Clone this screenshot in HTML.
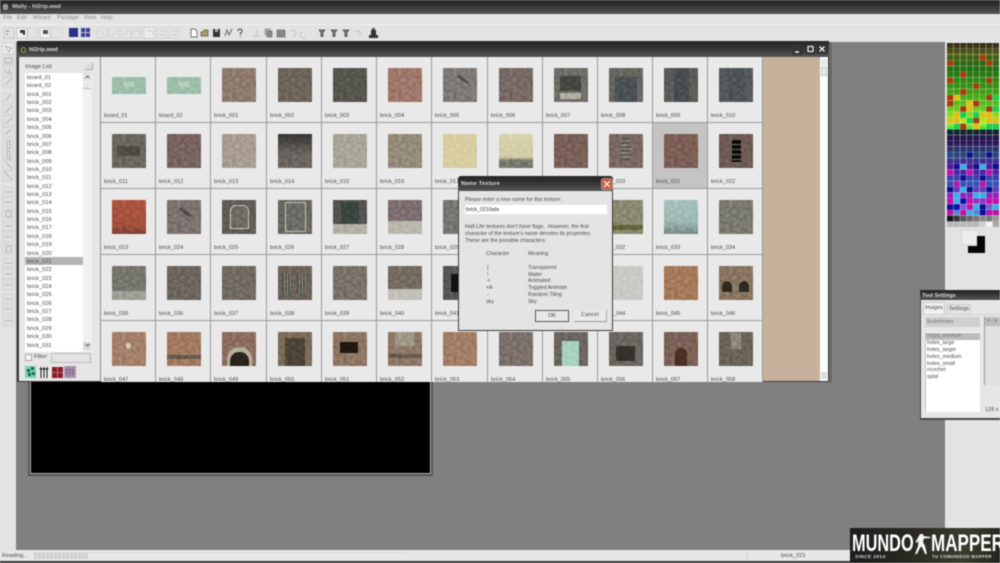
<!DOCTYPE html>
<html lang="en"><head><meta charset="utf-8"><title>Wally - hl2rip.wad</title>
<style>
html,body{margin:0;padding:0;background:#e3e3e3}
#r{position:relative;width:1000px;height:563px;overflow:hidden;background:#e3e3e3;font-family:"Liberation Sans",sans-serif;font-size:5.6px;color:#4a4a4a;filter:blur(.5px)}
#o{position:absolute;left:0;top:0;width:1000px;height:563px;overflow:hidden}
.a,.t{position:absolute}
.t{white-space:nowrap;line-height:10px}
.tb{background:linear-gradient(#262626,#303030 35%,#565656)}
#grid{position:absolute;left:101px;top:57px;width:662px;height:325px;overflow:hidden;display:grid;grid-template-columns:55px 55px 56px 55px 55px 55px 56px 55px 55px 55px 55px 55px;grid-auto-rows:66px;background:#e9e9e9}
#grid>div{position:relative;border-right:1px solid #9a9a9a;border-bottom:1px solid #9a9a9a;box-sizing:border-box}
#grid b{position:absolute;left:11px;top:11px;width:34px;height:34px;font-weight:normal;overflow:hidden}
#grid b::after{content:"";position:absolute;left:0;top:0;width:34px;height:34px;background:#808080;filter:url(#n);mix-blend-mode:overlay}
#grid i{position:absolute;display:block}
#grid span{position:absolute;left:3px;top:55px;line-height:8px;white-space:nowrap}
#list{position:absolute;left:25px;top:73px;width:58px;height:279px;background:#fff;overflow:hidden}
#list div{height:8.36px;line-height:10px;padding-left:2px;font-size:5.7px;white-space:nowrap;overflow:visible}
</style></head><body>
<svg width="0" height="0" style="position:absolute"><filter id="n" x="0" y="0" width="100%" height="100%" color-interpolation-filters="sRGB"><feTurbulence type="fractalNoise" baseFrequency=".28" numOctaves="2" seed="4"/><feColorMatrix values="1.5 0 0 0 -.25  1.5 0 0 0 -.25  1.5 0 0 0 -.25  0 0 0 0 .16"/></filter></svg>
<div id="r"><div id="o">

<!-- main title -->
<div class="a tb" style="left:0;top:0;width:1000px;height:14px"></div>
<div class="a" style="left:3px;top:4px;width:5px;height:6px;background:#999;border-radius:2px"></div>
<div class="t" style="left:12px;top:2px;color:#ccc;font-weight:bold;font-size:5.8px">Wally - hl2rip.wad</div>
<!-- menu -->
<div class="t" style="left:3px;top:13px;color:#888">File</div>
<div class="t" style="left:17px;top:13px;color:#888">Edit</div>
<div class="t" style="left:33px;top:13px;color:#888">Wizard</div>
<div class="t" style="left:57px;top:13px;color:#888">Package</div>
<div class="t" style="left:84px;top:13px;color:#888">View</div>
<div class="t" style="left:101px;top:13px;color:#888">Help</div>
<div class="a" style="left:0;top:24px;width:1000px;height:1px;background:#f0f0f0"></div>

<!-- toolbar icons -->
<svg class="a" style="left:0;top:24px" width="400" height="18" viewBox="0 0 400 18">
<g fill="none" stroke="#aaa" stroke-width=".7">
<rect x="4" y="4" width="10" height="10" stroke="#bbb"/><rect x="17" y="4" width="10" height="10" fill="#f3f3f3" stroke="#bbb"/><rect x="28" y="4" width="9" height="10" stroke="#d0d0d0"/><rect x="40" y="4" width="10" height="10" fill="#f3f3f3" stroke="#bbb"/><rect x="52" y="4" width="10" height="10" stroke="#d0d0d0"/>
<rect x="97" y="4" width="10" height="10" stroke="#cfcfcf"/><rect x="109" y="4" width="10" height="10" stroke="#cfcfcf"/><rect x="121" y="4" width="10" height="10" stroke="#cfcfcf"/><rect x="132" y="4" width="10" height="10" stroke="#cfcfcf"/><rect x="144" y="3.500" width="11" height="11" stroke="#c4c4c4" fill="#ececec"/><rect x="157" y="4" width="10" height="10" stroke="#cfcfcf"/><rect x="169" y="4" width="10" height="10" stroke="#cfcfcf"/>
<path d="M6 7h3M6 10h2" stroke="#555"/><path d="M20 6h5v5h-2v-2h-3z" fill="#333" stroke="none"/><rect x="43" y="6" width="5" height="4" fill="#555" stroke="none"/>
<path d="M100 7l5 5M112 12l5-5M123 12l6-6M135 7h5v5M147 7h6v5M160 7h5M160 11h5M172 7h5M172 11h5" stroke="#c0c0c0"/>
</g>
<rect x="69" y="4" width="9" height="9" fill="#2e2e88"/>
<rect x="81" y="4" width="9" height="9" fill="#3f3f9a"/><path d="M85.500 4v9M81 8.500h9" stroke="#ddd" stroke-width=".8"/>
<path d="M191 5h4l2 2v6h-6z" fill="#fff" stroke="#444" stroke-width=".7"/>
<path d="M201 8h2l1-2h4v6h-7z" fill="#a89c68" stroke="#555" stroke-width=".7"/>
<rect x="213" y="5" width="7" height="8" fill="#333"/><rect x="215" y="5" width="3" height="3" fill="#aaa"/>
<path d="M225 12l2-6 2 5 3-6" fill="none" stroke="#666" stroke-width="1"/>
<path d="M238 7a2 2 0 1 1 2.500 2v1.500M240.500 12v1" fill="none" stroke="#555" stroke-width="1.200"/>
<path d="M253 12h7M256.500 6v6" stroke="#c0c0c0"/>
<rect x="265" y="5" width="5" height="6" fill="#bbb" stroke="#777" stroke-width=".6"/><rect x="267" y="7" width="5" height="6" fill="#888" stroke="#666" stroke-width=".6"/>
<rect x="277" y="6" width="8" height="7" fill="#888" stroke="#666" stroke-width=".6"/>
<path d="M290 8a3 3 0 1 1 2 4M303 8a3 3 0 1 0 3 4" fill="none" stroke="#c4c4c4"/>
<g fill="#777" stroke="#444" stroke-width=".7"><path d="M319 6h6l-2 2.500v4h-2v-4zM331 6h6l-2 2.500v4h-2v-4zM343 6h6l-2 2.500v4h-2v-4z"/></g>
<path d="M354 7h6v4" fill="none" stroke="#c4c4c4"/>
<path d="M369 11h9v3h-9zM371 6h5v5h-5z" fill="#333"/><rect x="372" y="4" width="3" height="2" fill="#555"/>
</svg>

<!-- main grey area -->
<div class="a" style="left:16px;top:42px;width:929px;height:508px;background:#808080"></div>
<div class="a" style="left:28px;top:380px;width:405px;height:96px;background:#555"></div>
<div class="a" style="left:30px;top:380px;width:401px;height:94px;background:#b0b0b0"></div>
<div class="a" style="left:31px;top:380px;width:399px;height:93px;background:#000"></div>

<!-- left toolbar -->
<svg class="a" style="left:0;top:42px" width="16" height="290" viewBox="0 0 16 290">
<g fill="#dfdfdf" stroke="#cfcfcf" stroke-width=".7">
<rect x="2.500" y="1" width="11" height="11" fill="#ececec"/><rect x="2.500" y="13" width="11" height="10"/><rect x="2.500" y="24" width="11" height="10"/><rect x="2.500" y="35" width="11" height="10"/>
<rect x="2.500" y="51" width="11" height="10"/><rect x="2.500" y="63" width="11" height="10"/><rect x="2.500" y="74" width="11" height="10"/><rect x="2.500" y="85" width="11" height="10"/><rect x="2.500" y="97" width="11" height="10"/><rect x="2.500" y="107" width="11" height="10"/><rect x="2.500" y="118" width="11" height="10"/><rect x="2.500" y="129" width="11" height="10"/>
<rect x="2.500" y="145" width="11" height="10"/><rect x="2.500" y="155" width="11" height="10"/><rect x="2.500" y="167" width="11" height="10"/><rect x="2.500" y="179" width="11" height="10"/><rect x="2.500" y="190" width="11" height="10"/><rect x="2.500" y="202" width="11" height="10"/><rect x="2.500" y="216" width="11" height="10"/><rect x="2.500" y="227" width="11" height="10"/><rect x="2.500" y="238" width="11" height="10"/><rect x="2.500" y="252" width="11" height="10"/><rect x="2.500" y="262" width="11" height="10"/><rect x="2.500" y="274" width="11" height="10"/>
</g>
<g fill="none" stroke="#aaa" stroke-width=".8">
<path d="M5 4l4 6 1-3 2-1zM5 16h7v5H5zM6 28a2 2 0 1 0 3 0M10 30l2 3M5 43l7-7M5 59l6-7M5 71l7-7M5 82l7-6M5 93l6-6M7 99h3v7H7zM7 109h3v7H7zM5 119l7 8M5 130l7 8M5 150h7M5 160h7M6 169h5v6H6zM5 184h7M5 195h7M6 204h5v6H6zM5 221h7M5 232h7M5 243h7M5 257h7M5 267h7M5 279h7"/>
</g></svg>

<!-- texture window -->
<div class="a" style="left:829px;top:42px;width:3px;height:341px;background:#6a6a6a"></div>
<div class="a" style="left:17px;top:41px;width:812px;height:341px;background:#3a3a3a"></div>
<div class="a tb" style="left:17px;top:41px;width:812px;height:16px"></div>
<div class="a" style="left:21px;top:47px;width:3px;height:4px;border:1px solid #8a9a50;border-radius:3px"></div>
<div class="t" style="left:29px;top:45px;color:#ddd;font-weight:bold;font-size:5.800px">hl2rip.wad</div>
<svg class="a" style="left:792px;top:44px" width="36" height="12" viewBox="0 0 36 12"><rect x="0" y="1" width="11" height="10" rx="2" fill="#333"/><rect x="13" y="0" width="11" height="10" rx="2" fill="#333"/><rect x="25" y="0" width="10" height="10" rx="2" fill="#333"/><path d="M3 8h4" stroke="#eee" stroke-width="1.500"/><rect x="16" y="2.500" width="5" height="5" fill="none" stroke="#eee" stroke-width="1.200"/><path d="M27.500 2.500l5 5M32.500 2.500l-5 5" stroke="#eee" stroke-width="1.400"/></svg>

<!-- image list panel -->
<div class="a" style="left:19px;top:57px;width:82px;height:324px;background:#e6e6e6"></div>
<div class="a" style="left:100px;top:57px;width:1px;height:324px;background:#8f8f8f"></div>
<div class="t" style="left:25px;top:62px;font-size:5.800px">Image List</div>
<div class="a" style="left:85px;top:63px;width:7px;height:6px;background:#ddd;border-bottom:1px solid #aaa;border-right:1px solid #aaa"></div>
<div id="list">
<div>board_01</div><div>board_02</div><div>brick_001</div><div>brick_002</div><div>brick_003</div><div>brick_004</div><div>brick_005</div><div>brick_006</div><div>brick_007</div><div>brick_008</div><div>brick_009</div><div>brick_010</div><div>brick_011</div><div>brick_012</div><div>brick_013</div><div>brick_014</div><div>brick_015</div><div>brick_016</div><div>brick_017</div><div>brick_018</div><div>brick_019</div><div>brick_020</div><div style="background:#b4b4b4">brick_021</div><div>brick_022</div><div>brick_023</div><div>brick_024</div><div>brick_025</div><div>brick_026</div><div>brick_027</div><div>brick_028</div><div>brick_029</div><div>brick_030</div><div>brick_031</div>
</div>
<div class="a" style="left:83px;top:73px;width:9px;height:279px;background:#f1f1f1"></div>
<div class="a" style="left:83px;top:73px;width:8px;height:8px;background:#e0e0e0"></div>
<div class="a" style="left:83px;top:82px;width:8px;height:6px;background:#e8e8e8;border-bottom:1px solid #bbb"></div>
<div class="a" style="left:83px;top:342px;width:8px;height:8px;background:#d8d8d8"></div>
<svg class="a" style="left:84px;top:74px" width="7" height="280" viewBox="0 0 7 280"><path d="M1.500 4l2-2 2 2M1.500 270l2 2 2-2" fill="none" stroke="#666"/></svg>
<div class="a" style="left:25px;top:354px;width:5px;height:5px;background:#f5f5f5;border:1px solid #aaa"></div>
<div class="t" style="left:34px;top:352px">Filter:</div>
<div class="a" style="left:51px;top:353px;width:40px;height:10px;background:#e2e2e2;border:1px solid #bbb;box-sizing:border-box"></div>
<svg class="a" style="left:25px;top:366px" width="52" height="13" viewBox="0 0 52 13">
<rect x="0" y="0" width="11" height="12" fill="#7fcfb0"/><path d="M2 3h3v3H2zM6 1h3v3H6zM3 7h3v3H3zM7 6h3v3H7z" fill="#1a6a50"/>
<rect x="14" y="1" width="10" height="11" fill="#eee"/><path d="M14.500 3h9M16 1v11M19 1v11M22 1v11" stroke="#222" stroke-width="1.100"/>
<rect x="27" y="1" width="11" height="11" fill="#8c1a2a"/><path d="M27 6.500h11M32.500 1v11" stroke="#d8b0b0" stroke-width=".6"/>
<rect x="39" y="0" width="12" height="12" fill="#a8a0a8"/><path d="M42 1v10M45 1v10M48 1v10M40 4h10M40 7h10" stroke="#8f5f9a" stroke-width="1"/>
</svg>

<!-- thumbnails -->
<div id="grid">
<div><b style="top:20px;height:17px;background:#9dbfa9"><i style="left:12px;top:5px;width:10px;height:5px;background:#b9d3bf"></i></b><span>board_01</span></div>
<div><b style="top:20px;height:17px;background:#9dbfa9"><i style="left:12px;top:5px;width:10px;height:5px;background:#b9d3bf"></i></b><span>board_02</span></div>
<div><b style="background:#8f7b6e"></b><span>brick_001</span></div>
<div><b style="background:#6f645a"></b><span>brick_002</span></div>
<div><b style="background:#56564d"></b><span>brick_003</span></div>
<div><b style="background:#a0786a"></b><span>brick_004</span></div>
<div><b style="background:#7f7a76"><i style="left:14px;top:10px;width:12px;height:3px;background:#55504c;transform:rotate(35deg)"></i></b><span>brick_005</span></div>
<div><b style="background:#786a64"></b><span>brick_006</span></div>
<div><b style="background:#706e68"><i style="left:6px;top:8px;width:21px;height:15px;background:#45463f"></i><i style="left:6px;top:25px;width:21px;height:6px;background:#aeb0a4"></i></b><span>brick_007</span></div>
<div><b style="background:#686660"><i style="left:6px;top:9px;width:22px;height:25px;background:#4b5055"></i></b><span>brick_008</span></div>
<div><b style="background:#5a5c57"><i style="left:10px;top:0;width:15px;height:34px;background:#484d50"></i></b><span>brick_009</span></div>
<div><b style="background:#565a5a"><i style="left:8px;top:0;width:18px;height:34px;background:#4d5458"></i></b><span>brick_010</span></div>

<div><b style="background:#6b685f"><i style="left:5px;top:12px;width:23px;height:10px;background:#4d4c46"></i></b><span>brick_011</span></div>
<div><b style="background:#78645e"></b><span>brick_012</span></div>
<div><b style="background:#a89d90"></b><span>brick_013</span></div>
<div><b style="background:linear-gradient(#353532,#6a6560 60%,#6a6560)"></b><span>brick_014</span></div>
<div><b style="background:#a9a697"></b><span>brick_015</span></div>
<div><b style="background:#958c79"></b><span>brick_016</span></div>
<div><b style="background:#d8cea0"></b><span>brick_017</span></div>
<div><b style="background:linear-gradient(#d8d4ac,#d0cca6 68%,#76796c 78%)"></b><span>brick_018</span></div>
<div><b style="background:#7a5f58"></b><span>brick_019</span></div>
<div><b style="background:#7c6862"><i style="left:12px;top:4px;width:10px;height:22px;background:repeating-linear-gradient(#5e5650 0 2px,#85807a 2px 4px)"></i></b><span>brick_020</span></div>
<div style="background:#c4c4c4"><b style="background:#7c5e56"></b><span>brick_021</span></div>
<div><b style="background:#6e5b56"><i style="left:13px;top:6px;width:9px;height:22px;background:repeating-linear-gradient(#0c0c0a 0 4px,#77706a 4px 5px)"></i></b><span>brick_022</span></div>

<div><b style="background:linear-gradient(#ab5540,#a3513e 75%,#7c4436)"></b><span>brick_023</span></div>
<div><b style="background:#7c7270"><i style="left:12px;top:11px;width:13px;height:3px;background:#4e4644;transform:rotate(35deg)"></i></b><span>brick_024</span></div>
<div><b style="background:#5f5d58"><i style="left:8px;top:5px;width:17px;height:22px;background:#6c6c65;border:1px solid #c7c5ba;border-radius:6px 6px 0 0"></i></b><span>brick_025</span></div>
<div><b style="background:#696762"><i style="left:7px;top:2px;width:19px;height:28px;background:#6c6c66;border:1px solid #c4c2b6"></i></b><span>brick_026</span></div>
<div><b style="background:#55544f"><i style="left:8px;top:2px;width:18px;height:22px;background:#3d4440"></i><i style="left:0;top:24px;width:34px;height:10px;background:#b2b1a6"></i></b><span>brick_027</span></div>
<div><b style="background:#7e6e70"><i style="left:0;top:21px;width:34px;height:13px;background:#bab7ad"></i></b><span>brick_028</span></div>
<div><b style="background:#787672"></b><span>brick_029</span></div>
<div><b style="background:#7a7872"></b><span>brick_030</span></div>
<div><b style="background:#7d7a70"></b><span>brick_031</span></div>
<div><b style="background:#8a8a72"><i style="left:0;top:25px;width:34px;height:5px;background:#5f6535"></i></b><span>brick_032</span></div>
<div><b style="background:linear-gradient(#a6c0ba,#a0bab4 60%,#7c8a8a)"></b><span>brick_033</span></div>
<div><b style="background:#7a7a70"></b><span>brick_034</span></div>

<div><b style="background:#76766f"><i style="left:0;top:25px;width:34px;height:9px;background:#9f9f97"></i></b><span>brick_035</span></div>
<div><b style="background:#6c6560"></b><span>brick_036</span></div>
<div><b style="background:#716b62"></b><span>brick_037</span></div>
<div><b style="background:#6c625a"><i style="left:4px;top:7px;width:10px;height:21px;background:repeating-linear-gradient(90deg,#55534e 0 2px,#8f8e86 2px 3px)"></i><i style="left:19px;top:7px;width:10px;height:21px;background:repeating-linear-gradient(90deg,#55534e 0 2px,#8f8e86 2px 3px)"></i></b><span>brick_038</span></div>
<div><b style="background:#7a7268"></b><span>brick_039</span></div>
<div><b style="background:#746c60"><i style="left:0;top:23px;width:34px;height:11px;background:#c2c0b8"></i></b><span>brick_040</span></div>
<div><b style="background:#585654"><i style="left:8px;top:8px;width:16px;height:18px;background:#111"></i></b><span>brick_041</span></div>
<div><b style="background:#7a7268"></b><span>brick_042</span></div>
<div><b style="background:#7a7268"></b><span>brick_043</span></div>
<div><b style="background:#c9cac6"></b><span>brick_044</span></div>
<div><b style="background:#a57a5a"></b><span>brick_045</span></div>
<div><b style="background:#8a7560"><i style="left:3px;top:15px;width:10px;height:11px;background:#2d2a1e;border-radius:5px 5px 0 0"></i><i style="left:20px;top:15px;width:10px;height:11px;background:#2d2a1e;border-radius:5px 5px 0 0"></i></b><span>brick_046</span></div>

<div><b style="background:#a4806a"><i style="left:14px;top:11px;width:5px;height:6px;background:#d8c8b8;border-radius:3px"></i></b><span>brick_047</span></div>
<div><b style="background:#a27a62"><i style="left:0;top:23px;width:34px;height:4px;background:#66584a"></i></b><span>brick_048</span></div>
<div><b style="background:#8c6e5e"><i style="left:5px;top:15px;width:25px;height:19px;background:#b9ad9d;border-radius:12px 12px 0 0"></i><i style="left:8px;top:20px;width:19px;height:14px;background:#2b241e;border-radius:9px 9px 0 0"></i></b><span>brick_049</span></div>
<div><b style="background:#7c6c5a"><i style="left:7px;top:6px;width:20px;height:28px;background:#4d4438"></i></b><span>brick_050</span></div>
<div><b style="background:#8e7662"><i style="left:7px;top:10px;width:18px;height:11px;background:#1e1810"></i></b><span>brick_051</span></div>
<div><b style="background:#8f7966"><i style="left:7px;top:0;width:19px;height:14px;background:#a19886"></i><i style="left:0;top:22px;width:34px;height:4px;background:#665a4a"></i></b><span>brick_052</span></div>
<div><b style="background:#a37e66"></b><span>brick_053</span></div>
<div><b style="background:#7b716a"></b><span>brick_054</span></div>
<div><b style="background:#6b665f"><i style="left:8px;top:9px;width:17px;height:25px;background:#a8d2c2"></i></b><span>brick_055</span></div>
<div><b style="background:#6c6660"><i style="left:7px;top:14px;width:19px;height:15px;background:#35322c"></i></b><span>brick_056</span></div>
<div><b style="background:#7a6258"><i style="left:11px;top:16px;width:12px;height:18px;background:#4a2f22;border-radius:6px 6px 0 0"></i></b><span>brick_057</span></div>
<div><b style="background:#6a6358"><i style="left:12px;top:1px;width:10px;height:16px;background:#8d8b80"></i></b><span>brick_058</span></div>
</div>
<div class="a" style="left:763px;top:57px;width:57px;height:324px;background:#c6b19c"></div>
<div class="a" style="left:820px;top:57px;width:8px;height:324px;background:#fdfdfd"></div>
<div class="a" style="left:821px;top:59px;width:6px;height:7px;background:#e8e8e8"></div>
<div class="a" style="left:821px;top:67px;width:6px;height:9px;background:#e6e6e6;border:1px solid #ccc;box-sizing:border-box"></div>
<div class="a" style="left:821px;top:372px;width:6px;height:7px;background:#ddd"></div>

<!-- dialog -->
<div class="a" style="left:458px;top:176px;width:155px;height:155px;background:#3c3c3c;border-radius:3px 3px 0 0"></div>
<div class="a tb" style="left:458px;top:176px;width:155px;height:15px;border-radius:3px 3px 0 0"></div>
<div class="a" style="left:459px;top:191px;width:153px;height:139px;background:#e4e4e4"></div>
<div class="t" style="left:461px;top:179px;color:#ddd;font-weight:bold;font-size:5.600px;letter-spacing:.2px">Name Texture</div>
<svg class="a" style="left:601px;top:178px" width="12" height="12" viewBox="0 0 12 12"><rect x=".5" y=".5" width="11" height="11" rx="2" fill="#c2583f" stroke="#ddd" stroke-width=".5"/><path d="M3 3l6 6M9 3l-6 6" stroke="#f4e2da" stroke-width="1.500"/></svg>
<div class="t" style="left:465px;top:195px;font-size:5.300px">Please enter a new name for this texture:</div>
<div class="a" style="left:465px;top:205px;width:142px;height:9px;background:#fff"></div>
<div class="t" style="left:466px;top:205px;font-size:5.300px;color:#333">brick_021fade</div>
<div class="t" style="left:465px;top:222px;font-size:5.300px">Half-Life textures don't have flags.&nbsp; However, the first</div>
<div class="t" style="left:465px;top:229px;font-size:5.300px">character of the texture's name denotes its properties.</div>
<div class="t" style="left:465px;top:236px;font-size:5.300px">These are the possible characters:</div>
<div class="t" style="left:486px;top:249px;font-size:5.300px">Character</div><div class="t" style="left:528px;top:249px;font-size:5.300px">Meaning</div>
<div class="t" style="left:487px;top:263px;font-size:5.300px">{</div><div class="t" style="left:528px;top:263px;font-size:5.300px">Transparent</div>
<div class="t" style="left:487px;top:269.500px;font-size:5.300px">!</div><div class="t" style="left:528px;top:269.500px;font-size:5.300px">Water</div>
<div class="t" style="left:487px;top:276px;font-size:5.300px">+</div><div class="t" style="left:528px;top:276px;font-size:5.300px">Animated</div>
<div class="t" style="left:486px;top:283px;font-size:5.300px">+A</div><div class="t" style="left:528px;top:283px;font-size:5.300px">Toggled Animate</div>
<div class="t" style="left:487px;top:290px;font-size:5.300px">-</div><div class="t" style="left:528px;top:290px;font-size:5.300px">Random Tiling</div>
<div class="t" style="left:486px;top:297px;font-size:5.300px">sky</div><div class="t" style="left:528px;top:297px;font-size:5.300px">Sky</div>
<div class="a" style="left:535px;top:310px;width:34px;height:12px;border:1px solid #555;box-sizing:border-box;background:#e8e8e8;text-align:center;line-height:10px">OK</div>
<div class="a" style="left:574px;top:310px;width:33px;height:12px;border-bottom:1px solid #999;border-right:1px solid #aaa;box-sizing:border-box;background:#e8e8e8;text-align:center;line-height:11px">Cancel</div>

<!-- right panel -->
<svg class="a" style="left:947px;top:43px" width="52" height="184" viewBox="0 0 8 32" preserveAspectRatio="none" shape-rendering="crispEdges">
<defs>
<linearGradient id="g1" x1="0" y1="0" x2="0" y2="1"><stop offset="0" stop-color="#33251a"/><stop offset=".12" stop-color="#4f5a12"/><stop offset=".3" stop-color="#1f7010"/><stop offset=".55" stop-color="#3c9a10"/><stop offset=".75" stop-color="#5fc81c"/><stop offset=".92" stop-color="#b8ee18"/><stop offset="1" stop-color="#30e040"/></linearGradient>
<linearGradient id="g2" x1="0" y1="0" x2="0" y2="1"><stop offset="0" stop-color="#0c2a2a"/><stop offset=".14" stop-color="#2c1055"/><stop offset=".3" stop-color="#244d80"/><stop offset=".45" stop-color="#5a10a0"/><stop offset=".62" stop-color="#2858b8"/><stop offset=".8" stop-color="#a818c0"/><stop offset="1" stop-color="#40a0e0"/></linearGradient>
</defs>
<rect width="8" height="15" fill="url(#g1)"/><rect y="15" width="8" height="15" fill="url(#g2)"/>
<path fill="#a83a08" d="M5 2h1v1H5zM0 3h1v1H0zM6 3h1v1H6zM2 5h1v1H2zM0 6h1v1H0zM6 6h1v1H6zM4 7h1v1H4zM2 8h1v1H2zM0 9h1v1H0zM6 9h1v1H6zM4 10h1v1H4zM0 10h1v1H0zM2 11h1v1H2zM6 11h1v1H6zM4 13h1v1H4zM2 14h1v1H2z"/>
<path fill="#e0c010" d="M1 9h1v1H1zM3 11h1v1H3zM1 12h2v1H1zM5 12h2v1H5zM0 13h2v1H0zM6 13h2v1H6zM4 14h1v1H4zM3 10h1v1H3z"/>
<path fill="#1ad048" d="M2 12h1v1H2zM4 12h1v1H4zM7 11h1v1H7zM7 9h1v1H7zM1 14h1v1H1zM6 14h2v1H6zM3 13h1v1H3z"/>
<path fill="#0b0f90" d="M3 19h1v1H3zM6 19h1v1H6zM1 21h1v1H1zM4 21h1v1H4zM7 21h1v1H7zM2 23h1v1H2zM5 23h1v1H5zM0 25h1v1H0zM3 25h1v1H3zM6 25h1v1H6zM0 28h1v1H0zM5 28h1v1H5z"/>
<path fill="#c010a8" d="M0 22h1v1H0zM3 22h1v1H3zM6 22h1v1H6zM1 24h1v1H1zM5 24h1v1H5zM0 27h1v1H0zM3 27h1v1H3zM6 27h2v1H6zM2 29h1v1H2zM6 29h2v1H6zM0 29h1v1H0zM3 28h1v1H3z"/>
<path fill="#38b0e8" d="M2 25h1v1H2zM4 26h2v1H4zM1 27h1v1H1zM4 28h1v1H4zM7 28h1v1H7zM3 29h1v1H3zM1 26h1v1H1zM2 21h1v1H2zM5 21h1v1H5z"/>
<path fill="#0c0ca8" d="M5 29h1v1H5zM2 27h1v1H2zM1 28h1v1H1z"/>
<rect y="30" width="1" height="1" fill="#151515"/><rect x="1" y="30" width="1" height="1" fill="#333"/><rect x="2" y="30" width="1" height="1" fill="#555"/><rect x="3" y="30" width="1" height="1" fill="#666"/><rect x="4" y="30" width="1" height="1" fill="#777"/><rect x="5" y="30" width="1" height="1" fill="#888"/><rect x="6" y="30" width="1" height="1" fill="#777"/><rect x="7" y="30" width="1" height="1" fill="#999"/>
<rect y="31" width="5" height="1" fill="#b8b8b8"/><rect x="5" y="31" width="1" height="1" fill="#d0d0d0"/><rect x="6" y="31" width="1" height="1" fill="#f6f6f6"/><rect x="7" y="31" width="1" height="1" fill="#aaa"/>
<path d="M1 0v32M2 0v32M3 0v32M4 0v32M5 0v32M6 0v32M7 0v32" stroke="#e8e8e8" stroke-opacity=".4" fill="none" vector-effect="non-scaling-stroke" style="stroke-width:.6px"/>
<path d="M0 1h8M0 2h8M0 3h8M0 4h8M0 5h8M0 6h8M0 7h8M0 8h8M0 9h8M0 10h8M0 11h8M0 12h8M0 13h8M0 14h8M0 15h8M0 16h8M0 17h8M0 18h8M0 19h8M0 20h8M0 21h8M0 22h8M0 23h8M0 24h8M0 25h8M0 26h8M0 27h8M0 28h8M0 29h8M0 30h8M0 31h8" stroke="#e8e8e8" stroke-opacity=".35" fill="none" vector-effect="non-scaling-stroke" style="stroke-width:.6px"/>
</svg>
<svg class="a" style="left:960px;top:228px" width="28" height="28" viewBox="0 0 28 28"><rect x="1.500" y="2" width="17" height="15" fill="#ececec" stroke="#d2d2d2" stroke-width=".8"/><path d="M8 18h9V8h8v17H8z" fill="#060606"/></svg>

<!-- tool settings -->
<div class="a" style="left:920px;top:290px;width:80px;height:130px;background:#474747"></div>
<div class="a tb" style="left:920px;top:290px;width:80px;height:10px"></div>
<div class="t" style="left:922px;top:291px;color:#ddd;font-weight:bold;font-size:5.400px">Tool Settings</div>
<div class="a" style="left:921px;top:300px;width:79px;height:118px;background:#e6e6e6"></div>
<div class="a" style="left:923px;top:302px;width:22px;height:12px;background:#f0f0f0;border:1px solid #c8c8c8;border-bottom:0;box-sizing:border-box"></div>
<div class="t" style="left:925px;top:303px;font-size:5.500px">Images</div>
<div class="a" style="left:947px;top:304px;width:24px;height:10px;background:#e2e2e2;border:1px solid #ccc;border-bottom:0;box-sizing:border-box"></div>
<div class="t" style="left:949px;top:304px;font-size:5.500px">Settings</div>
<div class="a" style="left:921px;top:314px;width:79px;height:1px;background:#cfcfcf"></div>
<div class="a" style="left:925px;top:317px;width:55px;height:10px;background:#cfcfcf"></div>
<div class="t" style="left:927px;top:317px;font-size:5.300px;color:#777">BulletHoles</div>
<div class="a" style="left:925px;top:332px;width:55px;height:80px;background:#fff;border-left:1px solid #c4c4c4;box-sizing:border-box"></div>
<div class="a" style="left:926px;top:333px;width:54px;height:7px;background:#bcbcbc"></div>
<div class="t" style="left:927px;top:332px;font-size:5.300px;color:#777;line-height:9px">chips_medium</div>
<div class="t" style="left:927px;top:339px;font-size:5.300px;line-height:9px">holes_large</div>
<div class="t" style="left:927px;top:346px;font-size:5.300px;line-height:9px">holes_larger</div>
<div class="t" style="left:927px;top:353px;font-size:5.300px;line-height:9px">holes_medium</div>
<div class="t" style="left:927px;top:359.500px;font-size:5.300px;line-height:9px">holes_small</div>
<div class="t" style="left:927px;top:366px;font-size:5.300px;line-height:9px">ricochet</div>
<div class="t" style="left:927px;top:373px;font-size:5.300px;line-height:9px">splat</div>
<div class="a" style="left:984px;top:317px;width:16px;height:68px;background:#e0e0e0;border-left:1px solid #999;box-sizing:border-box"></div>
<div class="a" style="left:985px;top:317px;width:15px;height:9px;background:#bdbdbd"></div>
<div class="t" style="left:987px;top:316px;font-size:5px;color:#555">+ - x</div>
<div class="t" style="left:985px;top:405px;font-size:5.500px">128 x</div>

<!-- status -->
<div class="a" style="left:0;top:550px;width:1000px;height:11px;background:#e7e7e7"></div>
<div class="a" style="left:0;top:561px;width:1000px;height:2px;background:#333"></div>
<div class="t" style="left:2px;top:551px;font-size:5.700px">Reading...</div>
<div class="a" style="left:34px;top:553px;width:54px;height:6px;background:repeating-linear-gradient(90deg,#cfcfcf 0 3px,#e2e2e2 3px 4px)"></div>
<div class="a" style="left:34px;top:552px;width:372px;height:1px;background:#d8d8d8"></div>
<div class="a" style="left:747px;top:552px;width:1px;height:8px;background:#cfcfcf"></div>
<div class="t" style="left:781px;top:551px;font-size:5.700px">brick_021</div>

<!-- logo -->
<div class="a" style="left:850px;top:528px;width:150px;height:35px;background:linear-gradient(100deg,#1c1c1a,#2b2b24 45%,#3a3c2c 75%,#23241e)"></div>
<div class="a" style="left:852px;top:532px;color:#fff;font-weight:bold;font-size:24px;line-height:24px;transform:scaleX(.68);transform-origin:0 0;white-space:nowrap">MUNDO</div>
<div class="a" style="left:931px;top:532px;color:#fff;font-weight:bold;font-size:24px;line-height:24px;transform:scaleX(.71);transform-origin:0 0;white-space:nowrap">MAPPER</div>
<svg class="a" style="left:912px;top:533px" width="20" height="22" viewBox="0 0 20 22"><path d="M8 1h3l.5 2 7 1v1l-6.500 .5-1 3.500 2 4 2 8h-2l-3-7-1.500 0-3.500 7H3l3-8 .5-5-2 2L3.500 9z" fill="#f4f4f4"/></svg>
<div class="t" style="left:855px;top:552px;color:#ddd;font-weight:bold;font-size:4.600px;letter-spacing:.5px">SINCE 2014</div>
<div class="t" style="left:932px;top:552px;color:#ddd;font-weight:bold;font-size:4.300px;letter-spacing:.35px">TU COMUNIDAD MAPPER</div>

</div></div>
</body></html>
